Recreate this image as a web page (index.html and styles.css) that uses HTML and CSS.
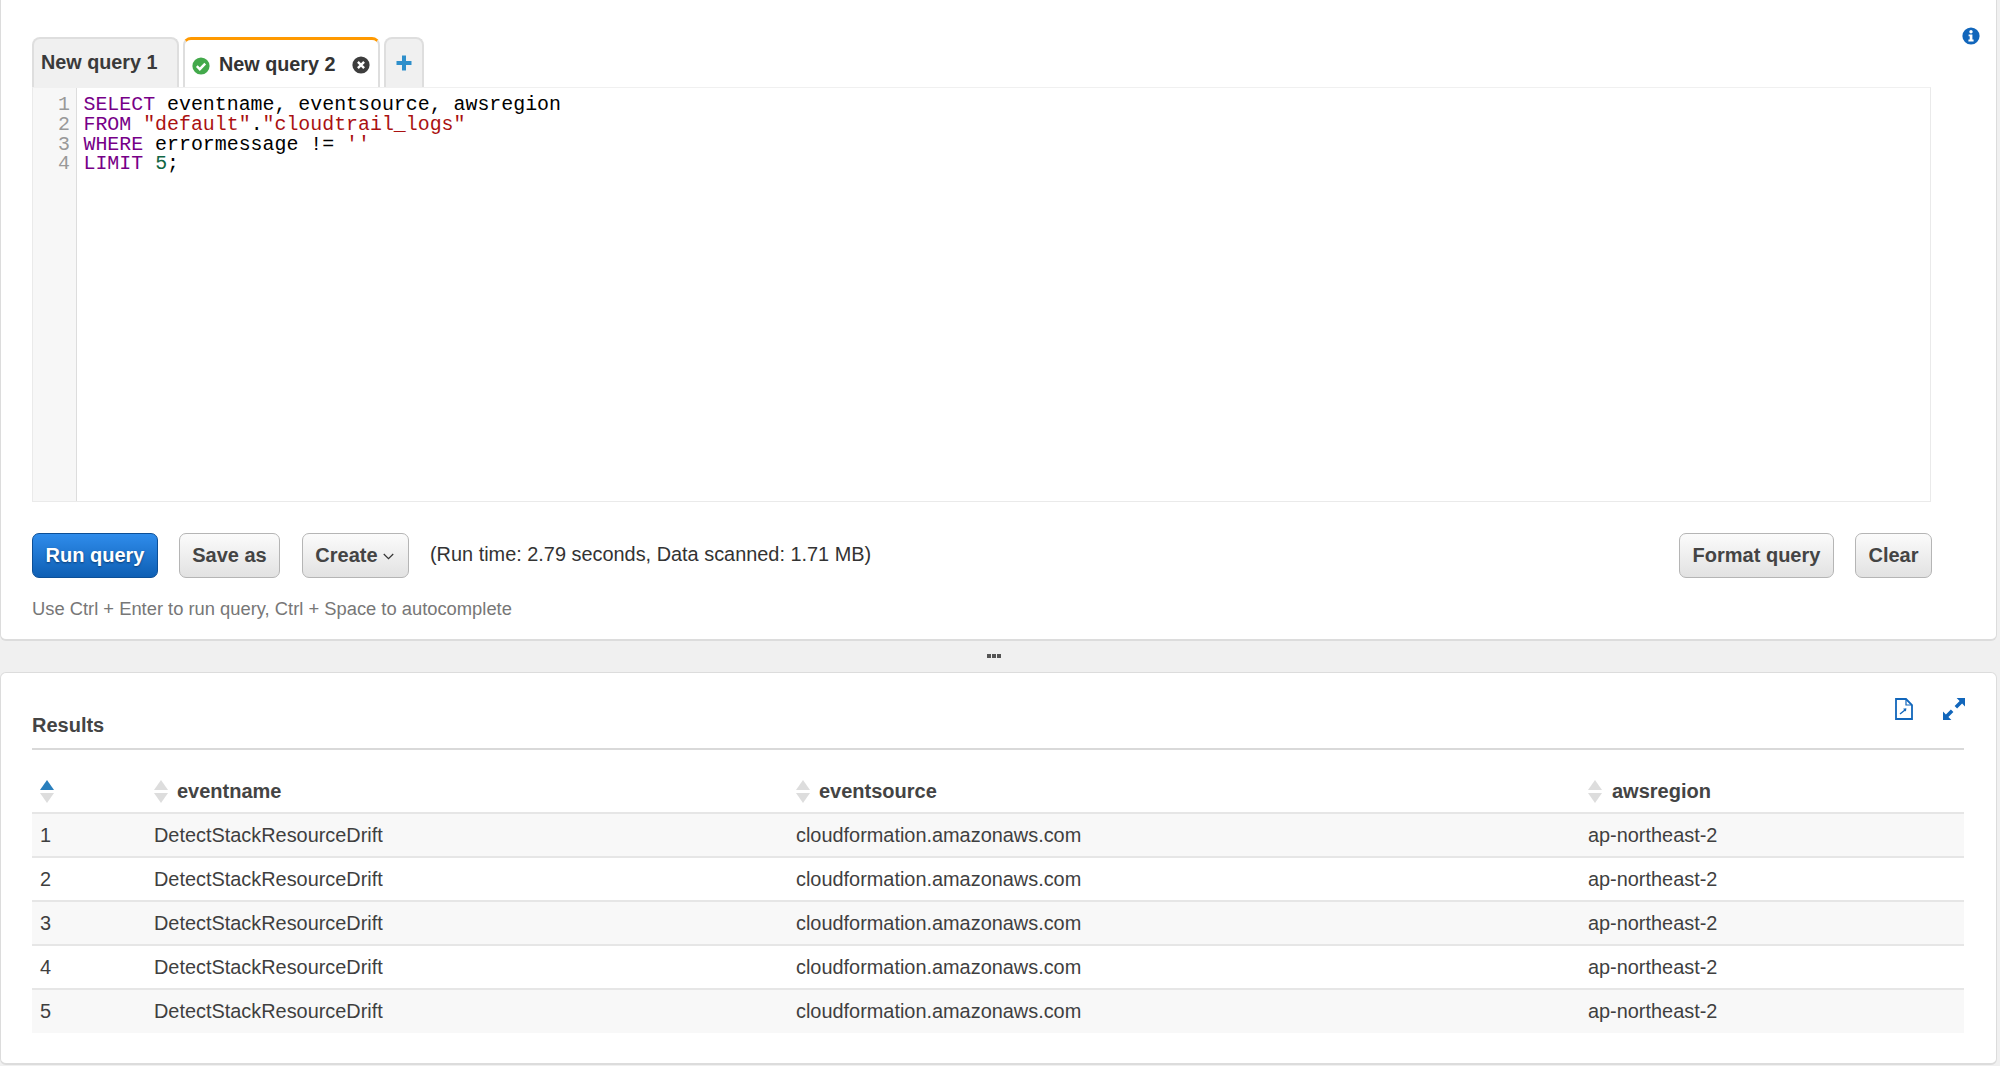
FILE: index.html
```html
<!DOCTYPE html>
<html lang="en">
<head>
<meta charset="utf-8">
<title>Athena query editor</title>
<link rel="stylesheet" href="styles.css">
</head>
<body>
<section class="panel panel-query">
  <svg class="info-icon" viewBox="0 0 18 18" width="18" height="18"><circle cx="9" cy="9" r="8.6" fill="#1166bb"/><circle cx="9" cy="4.8" r="1.7" fill="#fff"/><path d="M6.6 7.4h3.800v5.200h1.200v1.900H6.400v-1.900h1.300V9.300H6.600z" fill="#fff"/></svg>
  <div class="tabs">
    <div class="tab tab-plain">New query 1</div>
    <div class="tab tab-active">
      <svg class="tab-check" viewBox="0 0 18 18" width="18" height="18"><circle cx="9" cy="9" r="8.600" fill="#43a94b"/><path d="M4.800 9.200l3 3 5.400-5.600" fill="none" stroke="#fff" stroke-width="2.400"/></svg>
      <span class="tab-label">New query 2</span>
      <svg class="tab-close" viewBox="0 0 18 18" width="18" height="18"><circle cx="9" cy="9" r="8.600" fill="#3d3d3d"/><path d="M5.900 5.900l6.200 6.200M12.100 5.900l-6.200 6.200" stroke="#fff" stroke-width="2.400"/></svg>
    </div>
    <div class="tab tab-add"><svg viewBox="0 0 18 18" width="18" height="18"><path d="M9 1.500v15M1.500 9h15" stroke="#2e8fcb" stroke-width="4"/></svg></div>
  </div>
  <div class="editor">
    <div class="gutter"><div>1</div><div>2</div><div>3</div><div>4</div></div>
    <pre class="code"><span class="kw">SELECT</span> eventname, eventsource, awsregion
<span class="kw">FROM</span> <span class="str">"default"</span>.<span class="str">"cloudtrail_logs"</span>
<span class="kw">WHERE</span> errormessage != <span class="str">''</span>
<span class="kw">LIMIT</span> <span class="num">5</span>;</pre>
  </div>
  <div class="toolbar">
    <button class="btn btn-primary">Run query</button>
    <button class="btn btn-save">Save as</button>
    <button class="btn btn-create">Create<svg class="caret" viewBox="0 0 10 6" width="11" height="7"><path d="M.7.700L5 5l4.300-4.300" fill="none" stroke="#333" stroke-width="1.100"/></svg></button>
    <span class="run-info">(Run time: 2.79 seconds, Data scanned: 1.71 MB)</span>
    <button class="btn btn-format">Format query</button>
    <button class="btn btn-clear">Clear</button>
  </div>
  <p class="hint">Use Ctrl + Enter to run query, Ctrl + Space to autocomplete</p>
</section>
<div class="splitter"><i></i><i></i><i></i></div>
<section class="panel panel-results">
  <header class="results-head">
    <h2 class="results-title">Results</h2>
    <div class="results-actions">
      <svg viewBox="0 0 18 22" width="18" height="22"><path d="M1 1h10l6 6v14H1z" fill="none" stroke="#1166bb" stroke-width="1.800"/><path d="M11 1v6h6" fill="none" stroke="#1166bb" stroke-width="1.200"/><path d="M5 16l5-4" stroke="#1166bb" stroke-width="1.400"/><path d="M8 10.800l3.400-.6-.5 3.400z" fill="#1166bb"/></svg>
      <svg viewBox="0 0 22 22" width="22" height="22"><path d="M13.600 0H22v8.400l-2.900-2.900-5 5-2.500-2.500 5-5zM8.400 22H0v-8.400l2.900 2.900 5-5 2.500 2.500-5 5z" fill="#1166bb"/></svg>
    </div>
  </header>
  <table class="grid">
    <colgroup><col class="c1"><col class="c2"><col class="c3"><col class="c4"></colgroup>
    <thead>
      <tr>
        <th><span class="th-in"><svg class="sort" viewBox="0 0 14 23" width="14" height="23"><path d="M7 0l7 10H0z" fill="#2a7fbd"/><path d="M7 23l7-10H0z" fill="#ddd"/></svg></span></th>
        <th><span class="th-in"><svg class="sort" viewBox="0 0 14 23" width="14" height="23"><path d="M7 0l7 10H0z" fill="#ddd"/><path d="M7 23l7-10H0z" fill="#ddd"/></svg>eventname</span></th>
        <th><span class="th-in"><svg class="sort" viewBox="0 0 14 23" width="14" height="23"><path d="M7 0l7 10H0z" fill="#ddd"/><path d="M7 23l7-10H0z" fill="#ddd"/></svg>eventsource</span></th>
        <th><span class="th-in th-region"><svg class="sort" viewBox="0 0 14 23" width="14" height="23"><path d="M7 0l7 10H0z" fill="#ddd"/><path d="M7 23l7-10H0z" fill="#ddd"/></svg>awsregion</span></th>
      </tr>
    </thead>
    <tbody>
      <tr><td>1</td><td>DetectStackResourceDrift</td><td>cloudformation.amazonaws.com</td><td>ap-northeast-2</td></tr>
      <tr><td>2</td><td>DetectStackResourceDrift</td><td>cloudformation.amazonaws.com</td><td>ap-northeast-2</td></tr>
      <tr><td>3</td><td>DetectStackResourceDrift</td><td>cloudformation.amazonaws.com</td><td>ap-northeast-2</td></tr>
      <tr><td>4</td><td>DetectStackResourceDrift</td><td>cloudformation.amazonaws.com</td><td>ap-northeast-2</td></tr>
      <tr><td>5</td><td>DetectStackResourceDrift</td><td>cloudformation.amazonaws.com</td><td>ap-northeast-2</td></tr>
    </tbody>
  </table>
</section>
</body>
</html>
```
FILE: styles.css
```css
* { box-sizing: border-box; }
html, body { margin: 0; height: 1066px; overflow: hidden; }
body {
  width: 2000px;
  background: #f0f0f0;
  font-family: "Liberation Sans", Arial, sans-serif;
  font-size: 20px;
  color: #444;
  padding-right: 3px;
}
.panel {
  position: relative;
  background: #fff;
  border: 1px solid #dcdcdc;
  border-bottom-width: 2px;
}
.panel-query {
  height: 641px;
  border-top: 0;
  border-radius: 0 0 6px 6px;
  padding: 37px 64px 0 31px;
}
.info-icon { position: absolute; top: 27px; right: 16px; }

.tabs { display: flex; gap: 4px; height: 50px; }
.tab {
  display: flex;
  align-items: center;
  height: 50px;
  font-size: 19.8px;
  font-weight: 700;
  color: #333;
  background: #f0f0f0;
  border: 2px solid #dedede;
  border-bottom: 0;
  border-radius: 8px 8px 0 0;
}
.tab-plain { width: 147px; padding: 0 0 1px 7px; line-height: 46px; align-items: flex-start; color: #3a3a3a; }
.tab-active {
  width: 197px;
  background: #fff;
  border-top: 3px solid #ff9900;
  padding: 0 0 0 7px;
}
.tab-check { margin-top: 5px; }
.tab-label { margin-left: 9px; padding-top: 1px; }
.tab-close { margin-left: 16px; margin-top: 2px; }
.tab-add { width: 40px; justify-content: center; padding-bottom: 1px; }

.editor {
  display: flex;
  height: 415px;
  margin-right: 1px;
  border: 1px solid #eaeaea;
  border-top-color: #f0f0f0;
}
.gutter {
  width: 44px;
  background: #f7f7f7;
  border-right: 1px solid #ddd;
  padding: 7px 6px 0 0;
  text-align: right;
  font-family: "Liberation Mono", "Courier New", monospace;
  font-size: 19.9px;
  line-height: 19.75px;
  color: #999;
}
.code {
  margin: 0;
  padding: 7px 0 0 6.500px;
  font-family: "Liberation Mono", "Courier New", monospace;
  font-size: 19.9px;
  line-height: 19.75px;
  color: #000;
}
.kw { color: #770088; }
.str { color: #aa1111; }
.num { color: #116644; }

.toolbar { display: flex; align-items: center; height: 45px; margin-top: 31px; }
.btn {
  height: 45px;
  padding: 0;
  font-family: inherit;
  font-size: 20px;
  font-weight: 700;
  color: #444;
  background: linear-gradient(#fbfbfb, #e2e2e2);
  border: 1px solid #b5b5b5;
  border-radius: 7px;
  white-space: nowrap;
}
.btn-primary {
  width: 126px;
  color: #fff;
  background: linear-gradient(#2f8ceb, #0e5fb4);
  border-color: #0c4f97;
  text-shadow: 0 1px 2px #0a3c73;
}
.btn-save { width: 101px; margin-left: 21px; }
.btn-create { width: 107px; margin-left: 22px; padding-right: 2px; }
.caret { margin-left: 5px; vertical-align: 2px; }
.run-info { margin-left: 21px; font-size: 19.9px; color: #333; padding-bottom: 3px; }
.btn-format { width: 155px; margin-left: auto; }
.btn-clear { width: 77px; margin-left: 21px; }
.hint { margin: 19px 0 0; font-size: 18.35px; line-height: 23px; color: #777; }

.splitter {
  display: flex;
  justify-content: center;
  align-items: center;
  gap: 1px;
  height: 31px;
  padding-right: 10px;
  padding-bottom: 2px;
}
.splitter i { width: 4px; height: 4px; background: #555; }

.panel-results {
  height: 393px;
  border-radius: 6px;
  padding: 0 32px 0 31px;
}
.results-head {
  display: flex;
  justify-content: space-between;
  height: 77px;
  border-bottom: 2px solid #d9d9d9;
}
.results-title { margin: 40px 0 0; font-size: 20px; line-height: 24px; font-weight: 700; color: #444; }
.results-actions { display: flex; gap: 30px; align-items: flex-start; padding-top: 25px; margin-right: -1px; }

.grid { width: 100%; table-layout: fixed; border-collapse: collapse; }
.c1 { width: 114px; }
.c2 { width: 642px; }
.c3 { width: 792px; }
.grid th {
  height: 63px;
  padding: 0 0 9px 8px;
  vertical-align: bottom;
  text-align: left;
  font-weight: 700;
  color: #444;
}
.th-in { display: flex; align-items: center; gap: 9px; line-height: 24px; }
.th-region { gap: 10px; }
.grid td {
  height: 44px;
  padding: 0 0 0 8px;
  border-top: 2px solid #e6e6e6;
  font-size: 19.9px;
  color: #3f3f3f;
}
.grid tbody tr:nth-child(odd) { background: #f8f8f8; }
```
